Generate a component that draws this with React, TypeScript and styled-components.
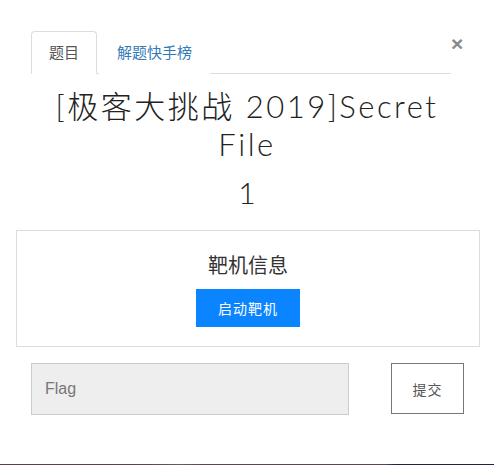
import React from "react";
import styled, { createGlobalStyle } from "styled-components";

const Global = createGlobalStyle`
  html, body { margin: 0; padding: 0; background: #fff; }
  body { font-family: "Liberation Sans", "Noto Sans CJK SC", sans-serif; color: #333; }
  * { box-sizing: border-box; }
`;

const Page = styled.div`
  width: 494px;
  height: 465px;
  display: flex;
  flex-direction: column;
  background: #fff;
`;

const Body = styled.div`
  flex: 1;
  padding-top: 31px;
`;

const Header = styled.div`
  display: flex;
  align-items: flex-start;
  padding: 0 31px;
`;

const Tabs = styled.ul`
  flex: 1;
  display: flex;
  list-style: none;
  margin: 0;
  padding: 0;
  border-bottom: 1px solid #ddd;
`;

const Tab = styled.li<{ $active?: boolean }>`
  margin-bottom: -1px;
  margin-right: 2px;
  padding: 10px 17px 11px;
  font-size: 15px;
  line-height: 20px;
  border: 1px solid ${(p) => (p.$active ? "#ddd" : "transparent")};
  border-bottom-color: ${(p) => (p.$active ? "#fff" : "transparent")};
  border-radius: 4px 4px 0 0;
  background: #fff;
  color: ${(p) => (p.$active ? "#555" : "#337ab7")};
  font-family: "Noto Sans CJK SC", sans-serif;
`;

const Close = styled.button`
  border: 0;
  background: none;
  padding: 0;
  margin-top: 3px;
  width: 12px;
  font-family: "Liberation Sans", sans-serif;
  font-size: 21px;
  font-weight: bold;
  line-height: 20px;
  color: #8a8a8a;
  cursor: pointer;
`;

const Title = styled.h2`
  margin: 13px 0 0;
  padding: 0 30px;
  text-align: center;
  font-family: "Lato", "Noto Sans CJK SC", sans-serif;
  font-weight: 300;
  font-size: 31px;
  line-height: 38px;
  letter-spacing: 2.5px;
  color: #222;
`;

const Score = styled.h2`
  margin: 7px 0 0;
  text-align: center;
  font-family: "Lato", sans-serif;
  font-weight: 300;
  font-size: 30px;
  line-height: 44px;
  color: #222;
`;

const InfoBox = styled.div`
  margin: 16px 14px 0 16px;
  border: 1px solid #ddd;
  padding: 20px 0 19px;
  display: flex;
  flex-direction: column;
  align-items: center;
`;

const InfoTitle = styled.h4`
  margin: 0;
  font-family: "Noto Sans CJK SC", sans-serif;
  font-weight: 400;
  font-size: 20px;
  line-height: 28px;
  color: #333;
`;

const StartButton = styled.button`
  margin-top: 10px;
  width: 104px;
  height: 38px;
  border: 0;
  background: #0a84ff;
  color: #fff;
  font-family: "Noto Sans CJK SC", sans-serif;
  font-size: 14px;
  letter-spacing: 1px;
  cursor: pointer;
`;

const FlagRow = styled.div`
  display: flex;
  align-items: flex-start;
  justify-content: space-between;
  margin: 16px 30px 0 31px;
`;

const FlagInput = styled.input`
  width: 318px;
  height: 52px;
  background: #eeeeee;
  border: 1px solid #ccc;
  padding: 0 13px;
  font-family: "Liberation Sans", sans-serif;
  font-size: 16px;
  color: #555;
  outline: none;
  &::placeholder { color: #777; }
`;

const SubmitButton = styled.button`
  width: 73px;
  height: 51px;
  background: #fff;
  border: 1px solid #777;
  font-family: "Noto Sans CJK SC", sans-serif;
  font-size: 14px;
  letter-spacing: 1px;
  color: #555;
  cursor: pointer;
`;

const Backdrop = styled.div`
  height: 1px;
  background: linear-gradient(90deg, #5a3f48 0%, #5c444c 30%, #6a5a60 36%, #5c444c 42%, #5c444c 78%, #1d2440 80%, #1d2440 100%);
`;

export default function App() {
  return (
    <Page>
      <Global />
      <Body>
        <Header>
          <Tabs>
            <Tab $active>题目</Tab>
            <Tab>解题快手榜</Tab>
          </Tabs>
          <Close aria-label="close">×</Close>
        </Header>
        <Title>[极客大挑战 2019]Secret File</Title>
        <Score>1</Score>
        <InfoBox>
          <InfoTitle>靶机信息</InfoTitle>
          <StartButton>启动靶机</StartButton>
        </InfoBox>
        <FlagRow>
          <FlagInput placeholder="Flag" />
          <SubmitButton>提交</SubmitButton>
        </FlagRow>
      </Body>
      <Backdrop />
    </Page>
  );
}
